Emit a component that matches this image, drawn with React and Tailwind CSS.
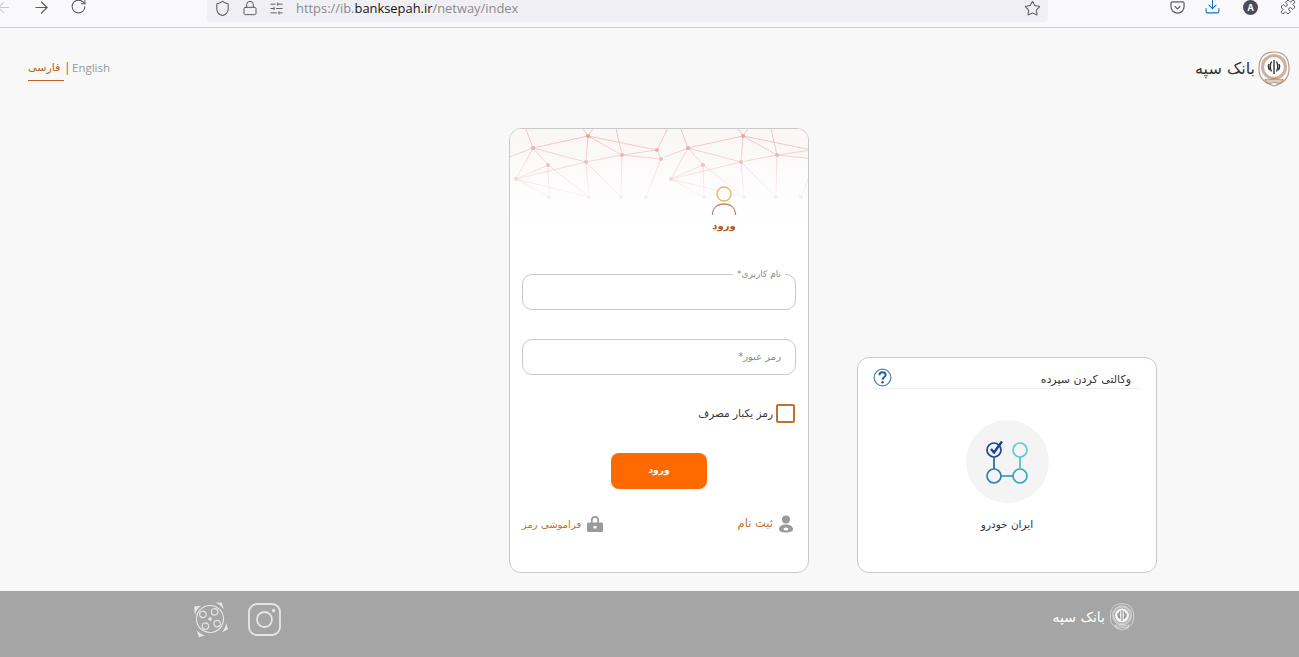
import { ArrowLeft, ArrowRight, RotateCw, Shield, Lock, SlidersHorizontal, Star, Download, Puzzle } from 'lucide-react'

const fa = "font-['DejaVu_Sans',sans-serif]"

// network pattern behind the login header, repeated every 155px
const nodes = [[23, 19], [78, 7], [112, 26], [76, 33], [38, 36], [6, 50], [147, 21], [151, 30], [39, 68], [79, 68], [111, 68], [136, 68]]
const links = [[0, 1], [0, 3], [0, 4], [1, 2], [1, 3], [2, 3], [2, 6], [2, 7], [3, 9], [4, 5], [4, 8], [0, 5], [6, 7], [2, 10], [5, 8], [7, 11], [4, 9], [1, 6], [3, 5], [5, 9], [3, 10]]

function Network() {
  return (
    <svg viewBox="0 0 298 110" className="absolute left-0 top-0 w-full h-[110px]">
      <defs>
        <linearGradient id="fade" x1="0" y1="0" x2="0" y2="1">
          <stop offset="0.1" stopColor="#fff" stopOpacity="0" />
          <stop offset="0.6" stopColor="#fff" stopOpacity="0.8" />
          <stop offset="0.9" stopColor="#fff" stopOpacity="1" />
        </linearGradient>
      </defs>
      <rect width="298" height="110" fill="#fbf7f7" />
      {[0, 155].map((dx) => (
        <g key={dx} transform={`translate(${dx} 0)`}>
          {links.map(([a, b]) => (
            <line key={`${a}-${b}`} x1={nodes[a][0]} y1={nodes[a][1]} x2={nodes[b][0]} y2={nodes[b][1]} stroke="#eeb9b9" strokeWidth="0.8" />
          ))}
          <line x1="23" y1="19" x2="0" y2="28" stroke="#eeb9b9" strokeWidth="0.8" />
          <line x1="23" y1="19" x2="14" y2="-5" stroke="#eeb9b9" strokeWidth="0.8" />
          <line x1="78" y1="7" x2="70" y2="-5" stroke="#eeb9b9" strokeWidth="0.8" />
          <line x1="78" y1="7" x2="86" y2="-5" stroke="#eeb9b9" strokeWidth="0.8" />
          <line x1="112" y1="26" x2="105" y2="-5" stroke="#eeb9b9" strokeWidth="0.8" />
          <line x1="147" y1="21" x2="160" y2="-5" stroke="#eeb9b9" strokeWidth="0.8" />
          {nodes.map(([x, y]) => (
            <circle key={`${x}-${y}`} cx={x} cy={y} r="2" fill="#e3a3a3" />
          ))}
        </g>
      ))}
      <rect width="298" height="110" fill="url(#fade)" />
    </svg>
  )
}

function Seal({ className, inner }) {
  return (
    <svg viewBox="0 0 32 36" className={className} fill="none" stroke="currentColor">
      <path d="M16 1c5 0 9 1 12 5s3 8 3 12-1 8-4 11-6 4-11 6c-5-2-8-3-11-6s-4-7-4-11 0-8 3-12 7-5 12-5z" strokeWidth="1.200" strokeOpacity="0.8" />
      <circle cx="16" cy="16" r="11.500" strokeWidth="3" strokeOpacity="0.6" />
      <circle cx="16" cy="16" r="9" fill="#fff" fillOpacity="0.9" stroke="none" />
      <g stroke={inner} strokeWidth="1.400">
        <path d="M16 9v14M13.500 10.500c-1.500 3-1.500 7 0 10M18.500 10.500c1.500 3 1.500 7 0 10M11 13c-1 2-.8 4 .8 6M21 13c1 2 .8 4-.8 6" />
      </g>
      <path d="M7 28c3 2 6-.5 9-.5s6 2.500 9 .5l-1.500 4c-2.500 1-5.500-.5-7.500-.5s-5 1.500-7.500.5z" fill="currentColor" fillOpacity="0.35" strokeWidth="0.8" />
    </svg>
  )
}

function BrowserBar() {
  return (
    <div className="h-[28px] shrink-0 flex items-start bg-[#f9f9fb] border-b border-[#cfcfd8] overflow-hidden text-[#5b5b66]">
      <ArrowLeft size={17} strokeWidth={1.5} className="shrink-0 mt-[-1px] ml-[-5px] text-[#c8c8cc]" />
      <ArrowRight size={19} strokeWidth={1.5} className="shrink-0 mt-[-2px] ml-[20px]" />
      <RotateCw size={17} strokeWidth={1.5} className="shrink-0 mt-[-2px] ml-[19px]" />
      <div className="w-[841px] shrink-0 h-[22px] ml-[120px] flex items-center bg-[#f0f0f4] rounded-b-[4px]">
        <Shield size={17} strokeWidth={1.5} className="ml-[7px] mt-[-6px]" />
        <Lock size={16} strokeWidth={1.5} className="ml-[11px] mt-[-6px]" />
        <SlidersHorizontal size={15} strokeWidth={1.5} className="ml-[11px] mt-[-6px]" />
        <span className="ml-[12px] mt-[-6px] font-['Open_Sans',sans-serif] text-[12.900px] leading-[16px] text-[#8a8a92]">
          https://ib.<span className="text-[#15141a]">banksepah.ir</span>/netway/index
        </span>
        <Star size={17} strokeWidth={1.5} className="ml-auto mr-[7px] mt-[-6px]" />
      </div>
      <svg viewBox="0 0 16 16" className="shrink-0 w-[15px] h-[15px] ml-[122px]" fill="none" stroke="currentColor" strokeWidth="1.300">
        <path d="M2.500 2h11A1.500 1.500 0 0 1 15 3.500V7a7 7 0 0 1-14 0V3.500A1.500 1.500 0 0 1 2.500 2z" />
        <path d="M5 6.500l3 3 3-3" />
      </svg>
      <Download size={17} strokeWidth={1.5} className="shrink-0 ml-[19px] mt-[-2px] text-[#0a6fc9]" />
      <div className="shrink-0 w-[15px] h-[15px] ml-[22px] flex items-center justify-center rounded-full bg-[#4a4a5a] text-white text-[9px] font-bold leading-none font-['Inter',sans-serif]">A</div>
      <Puzzle size={16} strokeWidth={1.5} className="shrink-0 ml-[22px] mt-[-1px]" />
    </div>
  )
}

function Header() {
  return (
    <div className="h-[100px] shrink-0 flex justify-between items-start pl-[28px] pr-[9px]">
      <div className="flex items-start pt-[31px] relative">
        <div className={`${fa} w-[36px] h-[22px] border-b border-[#c0642a] text-[11px] leading-[18px] text-[#b5632c]`}>فارسی</div>
        <div className="absolute left-[36px] top-[31px] text-[12px] leading-[18px] text-[#b5632c]">|</div>
        <div className="ml-[8px] font-['Open_Sans',sans-serif] text-[11.500px] leading-[18px] text-[#999]">English</div>
      </div>
      <div className="flex items-center gap-[3px] pt-[23px]">
        <div className={`${fa} text-[16px] text-[#333]`}>بانک سپه</div>
        <Seal className="w-[32px] h-[36px] text-[#a8836b]" inner="#333" />
      </div>
    </div>
  )
}

function Field({ label, inside, className }) {
  return (
    <div className={`relative h-[36px] border border-[#c9c9c9] rounded-[10px] bg-white ${className}`}>
      {inside ? (
        <span className={`${fa} absolute right-[14px] top-[9px] text-[10px] leading-[16px] text-[#8a8a8a]`}>{label}</span>
      ) : (
        <span className={`${fa} absolute right-[10px] top-[-8px] px-[4px] bg-white text-[9px] leading-[14px] text-[#8a8a8a]`}>{label}</span>
      )}
    </div>
  )
}

function LoginCard() {
  return (
    <div dir="rtl" className="w-[300px] h-[445px] shrink-0 border border-[#c9c9c9] rounded-[12px] bg-white overflow-hidden">
      <div className="relative h-[145px]">
        <Network />
        <div className="relative flex justify-start pr-[59px] pt-[57px]">
          <div className="w-[50px] flex flex-col items-center">
            <svg viewBox="0 0 26 31" className="w-[26px] h-[31px]" fill="none" strokeWidth="1.300">
              <circle cx="13" cy="8" r="7" stroke="#e9b55e" />
              <path d="M1.500 29c0-7 4.500-11 11.500-11s11.500 4 11.500 11" stroke="#c58573" />
            </svg>
            <div className={`${fa} mt-[1px] text-[10px] leading-[16px] font-bold text-[#b5561c]`}>ورود</div>
          </div>
        </div>
      </div>
      <div className="px-[12px]">
        <Field label="نام کاربری*" />
        <Field label="رمز عبور*" inside className="mt-[29px]" />
        <div className="mt-[29px] flex items-center gap-[3px] mr-[1px]">
          <div className="w-[19px] h-[19px] border-2 border-[#c0702c] rounded-[2px]" />
          <span className={`${fa} text-[10.500px] text-[#333]`}>رمز یکبار مصرف</span>
        </div>
        <div className="mt-[30px] flex justify-center">
          <button className={`${fa} w-[96px] h-[36px] rounded-[8px] bg-[#ff6a00] text-white text-[9px] font-bold`}>ورود</button>
        </div>
        <div className="mt-[26px] h-[18px] flex justify-between items-center pr-[3px]">
          <div className="flex items-center gap-[6px]">
            <svg viewBox="0 0 14 18" className="w-[14px] h-[18px]" fill="#9a9a9a">
              <circle cx="7" cy="4.500" r="4" />
              <path d="M7 9.500c4 0 7 1.800 7 4.500s-3 3.500-7 3.500-7-.8-7-3.500 3-4.500 7-4.500zm0 3a2.500 1.500 0 1 0 0 3 2.500 1.500 0 0 0 0-3z" fillRule="evenodd" />
            </svg>
            <span className={`${fa} text-[11.500px] text-[#c8702e]`}>ثبت نام</span>
          </div>
          <div className="flex items-center gap-[5px]">
            <svg viewBox="0 0 18 18" className="w-[18px] h-[18px]" fill="#9a9a9a">
              <path d="M5 8V5a4 4 0 0 1 8 0v3h-1.700V5a2.300 2.300 0 0 0-4.600 0v3z" />
              <path fillRule="evenodd" d="M2.500 7.500h13A1.500 1.500 0 0 1 17 9v6.500a1.500 1.500 0 0 1-1.500 1.500h-13A1.500 1.500 0 0 1 1 15.500V9a1.500 1.500 0 0 1 1.500-1.500zM7.500 11v2.500h3V11z" />
            </svg>
            <span className={`${fa} text-[10px] text-[#c8702e]`}>فراموشی رمز</span>
          </div>
        </div>
      </div>
    </div>
  )
}

function ProxyCard() {
  return (
    <div dir="rtl" className="w-[300px] h-[216px] shrink-0 border border-[#c9c9c9] rounded-[12px] bg-white">
      <div className="mx-[15px] h-[31px] pt-[10px] border-b border-[#eeeeee] flex justify-between items-center pb-[1px]">
        <span className={`${fa} mr-[10px] mt-[5px] text-[11px] text-[#333]`}>وکالتی کردن سپرده</span>
        <svg viewBox="0 0 20 20" className="w-[19px] h-[19px]" fill="none">
          <circle cx="10" cy="10" r="8.800" stroke="#4d82bb" strokeWidth="1.300" />
          <path d="M6.800 7.500c0-2 1.500-3 3.300-3s3.200 1.100 3.200 2.800c0 2.400-3.300 2.500-3.300 5" stroke="#1f5f9e" strokeWidth="2" />
          <circle cx="10" cy="15" r="1.300" fill="#1f5f9e" />
        </svg>
      </div>
      <div className="mt-[31px] flex flex-col items-center">
        <div className="w-[83px] h-[83px] rounded-full bg-[#f4f4f4] flex items-center justify-center">
          <svg viewBox="0 0 42 46" className="w-[42px] h-[46px]" fill="none" strokeWidth="1.700">
            <circle cx="8" cy="11" r="7" stroke="#1c4a94" />
            <path d="M5 10l3 3.500 8-11" stroke="#1c3f94" strokeWidth="2.400" />
            <circle cx="34" cy="11" r="7" stroke="#5ccfca" />
            <circle cx="8" cy="37" r="7" stroke="#2c84ad" />
            <circle cx="34" cy="37" r="7" stroke="#3aaab5" />
            <path d="M8 18v12" stroke="#2268a0" />
            <path d="M34 18v12" stroke="#4cc0c0" />
            <path d="M15 37h12" stroke="#349cb0" />
          </svg>
        </div>
        <div className={`${fa} mt-[12px] text-[10.500px] leading-[18px] text-[#333]`}>ایران خودرو</div>
      </div>
    </div>
  )
}

function Footer() {
  return (
    <div className="h-[66px] shrink-0 bg-[#a5a5a5] flex justify-between items-start pl-[193px] pr-[164px] pt-[10px]">
      <div className="flex items-center gap-[21px] text-[#e6e6e6] pt-[1px]">
        <svg viewBox="0 0 34 34" className="w-[34px] h-[34px] rotate-[-12deg]" fill="none" stroke="currentColor" strokeWidth="1.100">
          <circle cx="17" cy="17" r="13.500" />
          <circle cx="11" cy="11" r="3.200" />
          <circle cx="23" cy="11" r="3.200" />
          <circle cx="11" cy="23" r="3.200" />
          <circle cx="23" cy="23" r="3.200" />
          <circle cx="17" cy="17" r="1.200" fill="currentColor" />
          <path d="M4 1.500l7 .8c-4 1.800-6.500 4.500-8 8zM26 2l6 1.500.5 7c-1.500-3.500-3.500-6-6.500-8.500zM1.500 25c1.500 3 4 5.500 7 7l-6 .5zM32 24l.5 7-7 1.500c3-1.800 5.500-4.800 6.500-8.500z" fill="currentColor" stroke="none" />
        </svg>
        <svg viewBox="0 0 33 33" className="w-[33px] h-[33px]" fill="none" stroke="currentColor" strokeWidth="1.800">
          <rect x="1" y="1" width="31" height="31" rx="8" />
          <circle cx="16.500" cy="16.500" r="7.500" />
          <circle cx="25.500" cy="7.500" r="1.700" fill="currentColor" stroke="none" />
        </svg>
      </div>
      <div className="flex items-center gap-[4px] text-white pt-[2px]">
        <div className={`${fa} text-[14px]`}>بانک سپه</div>
        <Seal className="w-[26px] h-[28px] text-[#e4e4e4]" inner="#8f8f8f" />
      </div>
    </div>
  )
}

export default function App() {
  return (
    <div className="w-[1299px] h-[657px] flex flex-col overflow-hidden bg-[#f8f8f8]">
      <BrowserBar />
      <Header />
      <div className="flex-1 flex items-end gap-[48px] pl-[509px] pb-[18px]">
        <LoginCard />
        <ProxyCard />
      </div>
      <Footer />
    </div>
  )
}
